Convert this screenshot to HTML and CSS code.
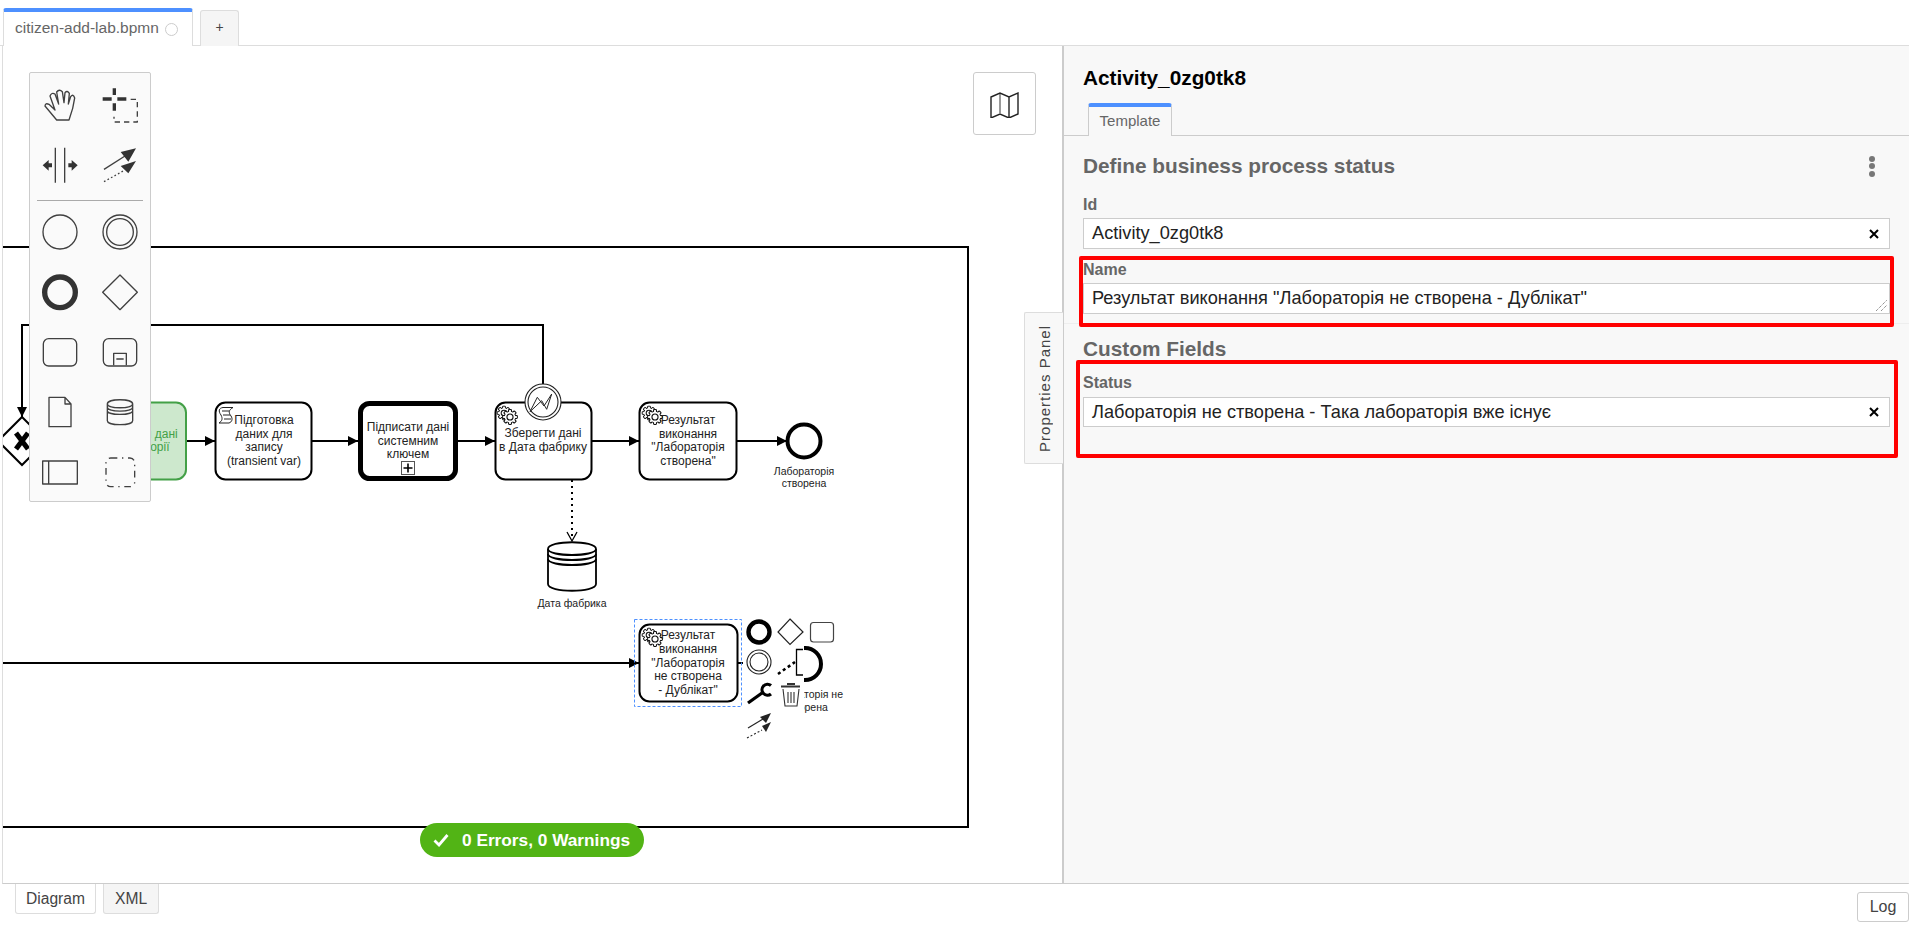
FILE: index.html
```html
<!DOCTYPE html>
<html lang="uk">
<head>
<meta charset="utf-8">
<title>citizen-add-lab.bpmn</title>
<link rel="stylesheet" href="styles.css">
</head>
<body>
<div class="tabbar">
  <div class="file-tab"><span>citizen-add-lab.bpmn</span><i class="dirty"></i></div>
  <div class="add-tab">+</div>
</div>
<main class="workspace">
  <section class="canvas">
    <svg class="diagram" viewBox="3 46 1059 837" width="1059" height="837">
      <defs>
        <marker id="arrow" markerUnits="userSpaceOnUse" markerWidth="12" markerHeight="12" refX="10" refY="6" orient="auto"><path d="M0 1 L10 6 L0 11 Z" fill="#000"/></marker>
        <g id="gear">
          <rect x="-7.7" y="-1.5" width="15.4" height="3" rx=".6" class="gs"/>
          <rect x="-7.7" y="-1.5" width="15.4" height="3" rx=".6" class="gs" transform="rotate(45)"/>
          <rect x="-7.7" y="-1.5" width="15.4" height="3" rx=".6" class="gs" transform="rotate(90)"/>
          <rect x="-7.7" y="-1.5" width="15.4" height="3" rx=".6" class="gs" transform="rotate(135)"/>
          <circle r="5.8" class="gs"/>
          <circle r="5.4" fill="#fff"/>
          <rect x="-7" y="-1" width="14" height="2" fill="#fff"/>
          <rect x="-7" y="-1" width="14" height="2" fill="#fff" transform="rotate(45)"/>
          <rect x="-7" y="-1" width="14" height="2" fill="#fff" transform="rotate(90)"/>
          <rect x="-7" y="-1" width="14" height="2" fill="#fff" transform="rotate(135)"/>
          <circle r="3.2" class="gs"/>
        </g>
        <g id="gears"><use href="#gear" transform="translate(-3 -2) scale(.88)"/><use href="#gear" transform="translate(3 2) scale(.95)"/></g>
      </defs>

      <rect class="pool" x="-10" y="247" width="978" height="580"/>

      <path class="flow" d="M543 385 V325 H22 V417" marker-end="url(#arrow)"/>
      <path class="flow" d="M187 441 H215" marker-end="url(#arrow)"/>
      <path class="flow" d="M312 441 H358" marker-end="url(#arrow)"/>
      <path class="flow" d="M458 441 H495" marker-end="url(#arrow)"/>
      <path class="flow" d="M592 441 H639" marker-end="url(#arrow)"/>
      <path class="flow" d="M737 441 H787" marker-end="url(#arrow)"/>
      <path class="flow" d="M3 663 H639" marker-end="url(#arrow)"/>
      <path class="flow" d="M738 663 H745"/>
      <path class="flow" d="M65 441 H87"/>

      <path class="shape" d="M22 417 L46 441 L22 465 L-2 441 Z"/>
      <path d="M16 433 L28 449 M28 433 L16 449" stroke="#000" stroke-width="5" fill="none"/>

      <rect class="task green" x="88" y="402.5" width="98" height="77" rx="10"/>
      <text class="t green-t" x="137" y="438">Отримати дані</text>
      <text class="t green-t" x="137" y="451">лабораторії</text>

      <rect class="task" x="215.5" y="402.5" width="96" height="77" rx="10"/>
      <path class="scr" d="M223 407.5 H233 C229 410 228 412 231 416 C233 419 232 422 229 423 H219 C222 421 223 419 221 415 C218 411 219 408 223 407.5 Z M222 411 H229 M223 415 H230 M224 419 H231"/>
      <text class="t" x="264" y="424">Підготовка</text>
      <text class="t" x="264" y="438">даних для</text>
      <text class="t" x="264" y="451">запису</text>
      <text class="t" x="264" y="465">(transient var)</text>

      <rect class="task thick" x="360.5" y="403.5" width="95" height="75" rx="9"/>
      <text class="t" x="408" y="431">Підписати дані</text>
      <text class="t" x="408" y="445">системним</text>
      <text class="t" x="408" y="458">ключем</text>
      <rect x="401.5" y="461.5" width="13" height="13" fill="#fff" stroke="#555"/>
      <path d="M408 463.5 V472.5 M403.5 468 H412.5" stroke="#000" stroke-width="1.6"/>

      <rect class="task" x="495.5" y="402.5" width="96" height="77" rx="10"/>
      <use href="#gears" x="507" y="415"/>
      <text class="t" x="543" y="437">Зберегти дані</text>
      <text class="t" x="543" y="451">в Дата фабрику</text>

      <circle cx="543" cy="402" r="18" fill="#fff" stroke="#222" stroke-width="1.1"/>
      <circle cx="543" cy="402" r="15" fill="#fff" stroke="#222" stroke-width="1.1"/>
      <path d="M530 411.7 L537.3 397.3 L544 406 L551.7 394 L546.7 409.3 L541.7 400.7 Z" fill="#fff" stroke="#222" stroke-width="1"/>

      <rect class="task" x="639.5" y="402.5" width="97" height="77" rx="10"/>
      <use href="#gears" x="652" y="415"/>
      <text class="t" x="688" y="424">Результат</text>
      <text class="t" x="688" y="438">виконання</text>
      <text class="t" x="688" y="451">"Лабораторія</text>
      <text class="t" x="688" y="465">створена"</text>

      <circle cx="804" cy="441" r="16.5" fill="#fff" stroke="#000" stroke-width="4"/>
      <text class="t small" x="804" y="475">Лабораторія</text>
      <text class="t small" x="804" y="487">створена</text>

      <path class="dot" d="M572 480 V538"/>
      <path d="M567 532 L572 541 L577 532" fill="none" stroke="#000" stroke-width="1.3"/>
      <path class="shape2" d="M548 549 C548 540 596 540 596 549 V584 C596 593 548 593 548 584 Z"/>
      <path class="shape3" d="M548 549 C548 557 596 557 596 549 M548 554 C548 562 596 562 596 554 M548 559 C548 567 596 567 596 559"/>
      <text class="t small" x="572" y="607">Дата фабрика</text>

      <circle cx="805" cy="664" r="16" fill="#fff" stroke="#000" stroke-width="4"/>
      <text class="t small" x="805.5" y="698">Лабораторія не</text>
      <text class="t small" x="805.5" y="711">створена</text>
      <rect x="743" y="645" width="61" height="95" fill="#fff"/>

      <rect class="task" x="639.5" y="624.5" width="98" height="77" rx="10"/>
      <use href="#gears" x="652" y="637"/>
      <text class="t" x="688" y="639">Результат</text>
      <text class="t" x="688" y="653">виконання</text>
      <text class="t" x="688" y="667">"Лабораторія</text>
      <text class="t" x="688" y="680">не створена</text>
      <text class="t" x="688" y="694">- Дублікат"</text>
      <rect x="634.5" y="619.5" width="107" height="87" fill="none" stroke="#4d90ff" stroke-dasharray="3 2"/>

      <circle cx="759" cy="632" r="10.5" fill="#fff" stroke="#000" stroke-width="4.4"/>
      <path d="M790 619 L803 632 L790 644.5 L778 632 Z" fill="#fff" stroke="#222" stroke-width="1.2"/>
      <rect x="810.5" y="622.5" width="23" height="19.5" rx="3" fill="#fff" stroke="#444" stroke-width="1.2"/>
      <circle cx="759" cy="662" r="12" fill="#fff" stroke="#222" stroke-width="1.1"/>
      <circle cx="759" cy="662" r="9" fill="#fff" stroke="#222" stroke-width="1.1"/>
      <path d="M778 674 L795 662" stroke="#000" stroke-width="2.6" stroke-dasharray="3 3" fill="none"/>
      <path d="M803 649.5 H796.5 V675 H803" stroke="#000" stroke-width="1.3" fill="none"/>
      <path d="M748 703 L762 693" stroke="#000" stroke-width="3.2" fill="none"/>
      <path d="M771 685.5 A5.5 5.5 0 1 0 771 694" stroke="#000" stroke-width="3.2" fill="none"/>
      <path d="M787 684 H795 M781 686.5 H800" stroke="#333" stroke-width="2" fill="none"/>
      <path d="M783 689 L785 706 H797 L799 689 M788 692 V703 M791 692 V703 M794 692 V703" stroke="#333" stroke-width="1.1" fill="none"/>
      <path d="M748 728 L763 719" stroke="#222" stroke-width="1.1"/>
      <path d="M771 713 L760 717 L766 723 Z" fill="#222"/>
      <path d="M747 738 L762 730" stroke="#222" stroke-width="1.1" stroke-dasharray="2 2"/>
      <path d="M771 722 L762 726 L766 732 Z" fill="#222"/>
    </svg>

    <nav class="palette">
      <div class="tools">
        <svg class="ic" viewBox="90 225 180 180"><path class="p" d="M170 360 L135 318 Q136 308 147 313 L165 330 L150 288 Q155 276 165 282 L176 312 L170 276 Q178 266 187 275 L192 308 L195 278 Q202 270 208 280 L205 312 L212 290 Q220 280 224 294 L218 325 L207 360 Z"/></svg>
        <svg class="ic" viewBox="270 225 180 180"><path d="M338 265 h10 v20 h-10 Z M338 310 h10 v22 h-10 Z M308 292 h27 v10 h-27 Z M352 292 h27 v10 h-27 Z" fill="#333"/><path class="p" d="M392 298 H412 V366 H342 V350" stroke-dasharray="16 12"/></svg>
        <svg class="ic" viewBox="90 405 180 180"><path class="p" d="M166 443 V548 M194 443 V548"/><path d="M128 496 L146 480 V490 H156 V502 H146 V512 Z M233 496 L215 480 V490 H205 V502 H215 V512 Z" fill="#333"/></svg>
        <svg class="ic" viewBox="270 405 180 180"><path class="p" d="M312 508 L375 468"/><path class="p" d="M312 545 L375 510" stroke-dasharray="5 7"/><path d="M408 445 L362 456 L385 485 Z M408 483 L362 498 L385 520 Z" fill="#333"/></svg>
      </div>
      <div class="sep"></div>
      <div class="tools">
        <svg class="ic" viewBox="90 606 180 180"><circle class="p" cx="180" cy="696" r="51"/></svg>
        <svg class="ic" viewBox="270 606 180 180"><circle class="p" cx="360" cy="696" r="51"/><circle class="p" cx="360" cy="696" r="40"/></svg>
        <svg class="ic" viewBox="90 6 180 180"><circle cx="180" cy="97" r="46" fill="none" stroke="#333" stroke-width="16"/></svg>
        <svg class="ic" viewBox="270 6 180 180"><path class="p" d="M360 45 L412 97 L360 149 L308 97 Z"/></svg>
        <svg class="ic" viewBox="90 186 180 180"><rect class="p" x="130" y="236" width="100" height="82" rx="16"/></svg>
        <svg class="ic" viewBox="270 186 180 180"><rect class="p" x="310" y="236" width="100" height="82" rx="16"/><path class="p" d="M341 316 V280 H379 V316 M349 297 H371"/></svg>
        <svg class="ic" viewBox="90 366 180 180"><path class="p" d="M147 412 H195 L213 432 V500 H147 Z M195 412 V432 H213"/></svg>
        <svg class="ic" viewBox="270 366 180 180"><path class="p" d="M322 432 C322 415 398 415 398 432 V482 C398 498 322 498 322 482 Z M322 432 C322 447 398 447 398 432 M322 442 C322 457 398 457 398 442 M322 452 C322 467 398 467 398 452"/></svg>
        <svg class="ic" viewBox="90 546 180 180"><path class="p" d="M128 603 H232 V672 H128 Z M146 603 V672"/></svg>
        <svg class="ic" viewBox="270 546 180 180"><rect class="p" x="318" y="594" width="86" height="86" rx="14" stroke-dasharray="20 14 4 14"/></svg>
      </div>
    </nav>

    <button class="minimap" type="button">
      <svg width="30" height="28" viewBox="0 0 30 28"><path d="M10 3 V23" stroke="#999" stroke-width="2" fill="none"/><path d="M1 7 L10 3 L19 7 L28 3 V24 L19 28 L10 24 L1 28 Z M19 7 V28" stroke="#222" stroke-width="1.4" fill="none"/></svg>
    </button>

    <div class="status-pill">
      <svg width="16" height="14" viewBox="0 0 16 14"><path d="M1.5 7.5 L6 12 L14.5 2" fill="none" stroke="#fff" stroke-width="2.8"/></svg>
      <span>0 Errors, 0 Warnings</span>
    </div>
  </section>

  <aside class="panel">
    <div class="props-tab"><span>Properties Panel</span></div>
    <h1 class="panel-title">Activity_0zg0tk8</h1>
    <div class="panel-tabs"><div class="panel-tab">Template</div></div>

    <div class="group">
      <div class="group-head">
        <h2>Define business process status</h2>
        <span class="dots"><i></i><i></i><i></i></span>
      </div>
      <label class="lbl lbl-id">Id</label>
      <div class="field"><span>Activity_0zg0tk8</span>
        <svg class="clear" width="10" height="10" viewBox="0 0 10 10"><path d="M1 1 L9 9 M9 1 L1 9" stroke="#000" stroke-width="2"/></svg>
      </div>
      <label class="lbl lbl-name">Name</label>
      <div class="field area"><span>Результат виконання "Лабораторія не створена - Дублікат"</span>
        <svg class="grip" width="11" height="11" viewBox="0 0 11 11"><path d="M0 11 L11 0 M5 11 L11 5" stroke="#666" stroke-width="1" stroke-dasharray="1 1"/></svg>
      </div>
    </div>

    <div class="group last">
      <div class="group-head second"><h2>Custom Fields</h2></div>
      <label class="lbl lbl-status">Status</label>
      <div class="field short"><span>Лабораторія не створена - Така лабораторія вже існує</span>
        <svg class="clear" width="10" height="10" viewBox="0 0 10 10"><path d="M1 1 L9 9 M9 1 L1 9" stroke="#000" stroke-width="2"/></svg>
      </div>
    </div>

    <div class="mark mark-name"></div>
    <div class="mark mark-status"></div>
  </aside>
</main>
<footer class="bottom">
  <div class="view-tab active">Diagram</div>
  <div class="view-tab">XML</div>
  <button class="log" type="button">Log</button>
</footer>
</body>
</html>
```

FILE: styles.css
```css
* { box-sizing: border-box; }
html, body { margin: 0; height: 100%; overflow: hidden; background: #fff; }
body { font-family: "Liberation Sans", Arial, sans-serif; color: #444; width: 1914px; height: 929px; }

.tabbar { height: 46px; padding: 8px 0 0 3px; border-bottom: 1px solid #ddd; display: flex; align-items: flex-start; margin-right: 5px; }
.file-tab { width: 190px; height: 38px; background: #fff; border: 1px solid #ddd; border-top: 4px solid #4d90ff; border-bottom: 0; border-radius: 3px 3px 0 0; display: flex; align-items: center; padding: 0 0 2px 11px; font-size: 15.5px; color: #666; }
.dirty { width: 13px; height: 13px; border: 1.5px solid #ccc; border-radius: 50%; margin-left: 6px; margin-top: 2px; }
.add-tab { width: 39px; height: 36px; margin: 2px 0 0 7px; background: #f5f5f5; border: 1px solid #ddd; border-bottom: 0; border-radius: 3px 3px 0 0; text-align: center; font-size: 14px; line-height: 33px; color: #444; }

.workspace { height: 838px; margin: 0 5px 0 2px; display: flex; border-left: 1px solid #ddd; border-right: 1px solid #ddd; border-bottom: 1px solid #ccc; }
.canvas { position: relative; width: 1059px; flex: none; overflow: hidden; background: #fff; }
.diagram { display: block; }
.pool { fill: none; stroke: #000; stroke-width: 2; }
.flow { fill: none; stroke: #000; stroke-width: 2; }
.dot { fill: none; stroke: #000; stroke-width: 2; stroke-dasharray: 2 4; }
.shape { fill: #fff; stroke: #000; stroke-width: 2; }
.shape2 { fill: #fff; stroke: #000; stroke-width: 1.8; }
.shape3 { fill: none; stroke: #000; stroke-width: 1.8; }
.task { fill: #fff; stroke: #000; stroke-width: 2; }
.task.thick { stroke-width: 5; }
.task.green { fill: #cde8cd; stroke: #43a047; }
.scr { fill: #fff; stroke: #222; stroke-width: 1; }
.gs { fill: #fff; stroke: #111; stroke-width: 1.2; }
.t { font-family: "Liberation Sans", Arial, sans-serif; font-size: 12px; fill: #222; text-anchor: middle; }
.t.small { font-size: 10.5px; }
.green-t { fill: #43a047; }

.palette { position: absolute; left: 26px; top: 26px; width: 122px; height: 430px; background: #fafafa; border: 1px solid #ccc; border-radius: 2px; padding-top: 2px; }
.tools { display: grid; grid-template-columns: 60px 60px; grid-auto-rows: 60px; }
.ic { width: 60px; height: 60px; display: block; }
.p { fill: none; stroke: #404040; stroke-width: 4; stroke-linejoin: round; }
.sep { height: 1px; background: #aaa; margin: 5px 7px 1px; }

.minimap { position: absolute; left: 970px; top: 26px; width: 63px; height: 63px; padding: 0; background: #fff; border: 1px solid #ccc; border-radius: 3px; display: flex; align-items: center; justify-content: center; }
.status-pill { position: absolute; left: 417px; top: 777px; width: 224px; height: 34px; border-radius: 17px; background: #52b415; color: #fff; font-weight: 700; font-size: 17.25px; display: flex; align-items: center; padding-left: 13px; gap: 13px; }

.panel { position: relative; width: 847px; flex: none; background: #f8f8f8; border-left: 2px solid #ccc; }
.panel-title { margin: 0; padding: 22px 0 0 19px; height: 57px; font-size: 20.8px; line-height: 20px; font-weight: 700; color: #000; }
.panel-tabs { height: 33px; padding-left: 24px; border-bottom: 1px solid #ccc; }
.panel-tab { width: 84px; height: 33px; background: #f8f8f8; border: 1px solid #ccc; border-top: 4px solid #4d90ff; border-bottom: 0; border-radius: 3px 3px 0 0; text-align: center; font-size: 15px; line-height: 27px; color: #666; }
.group { padding: 15px 19px 9px; border-bottom: 1px solid #eee; }
.group.last { border-bottom: 0; padding-top: 0; }
.group-head { height: 30px; display: flex; justify-content: space-between; align-items: center; }
.group-head.second { margin-top: 10px; }
.group-head h2 { margin: 0; font-size: 20.8px; font-weight: 700; color: #666; }
.dots { display: flex; flex-direction: column; gap: 1.5px; margin-right: 15px; }
.dots i { width: 6px; height: 6px; border-radius: 50%; background: #777; display: block; }
.lbl { display: block; height: 16px; line-height: 16px; font-size: 16px; font-weight: 700; color: #666; }
.lbl-id { margin: 16px 0 5px; }
.lbl-name { margin: 13px 0 5px; }
.lbl-status { margin: 11px 0 6px; }
.field { position: relative; height: 31px; background: #fff; border: 1px solid #ccc; padding: 0 8px; display: flex; align-items: center; justify-content: space-between; font-size: 18.2px; color: #222; }
.field.short { height: 30px; }
.clear { margin-right: 2px; }
.grip { position: absolute; right: 2px; bottom: 2px; }

.props-tab { position: absolute; left: -40px; top: 266px; width: 39px; height: 152px; background: #f8f8f8; border: 1px solid #ddd; border-right: 0; border-radius: 2px 0 0 2px; display: flex; align-items: center; justify-content: center; font-size: 15px; letter-spacing: 1px; color: #444; }
.props-tab span { writing-mode: vertical-rl; transform: rotate(180deg); white-space: nowrap; }
.mark { position: absolute; border: 4px solid #f00; border-radius: 2px; pointer-events: none; }
.mark-name { left: 15px; top: 210px; width: 815px; height: 71px; }
.mark-status { left: 12px; top: 314px; width: 822px; height: 98px; }

.bottom { display: flex; align-items: flex-start; padding-left: 15px; margin-right: 5px; }
.view-tab { height: 30px; padding: 0 11px; background: #f5f5f5; border: 1px solid #ddd; border-top: 0; border-radius: 0 0 3px 3px; font-size: 15.6px; line-height: 29px; color: #444; margin-right: 7px; }
.view-tab.active { background: #fff; width: 81px; text-align: center; padding: 0; }
.log { margin: 8px 0 0 auto; width: 52px; height: 30px; padding: 0; background: #fff; border: 1px solid #ccc; border-radius: 3px; font-family: inherit; font-size: 16px; color: #444; }
```
